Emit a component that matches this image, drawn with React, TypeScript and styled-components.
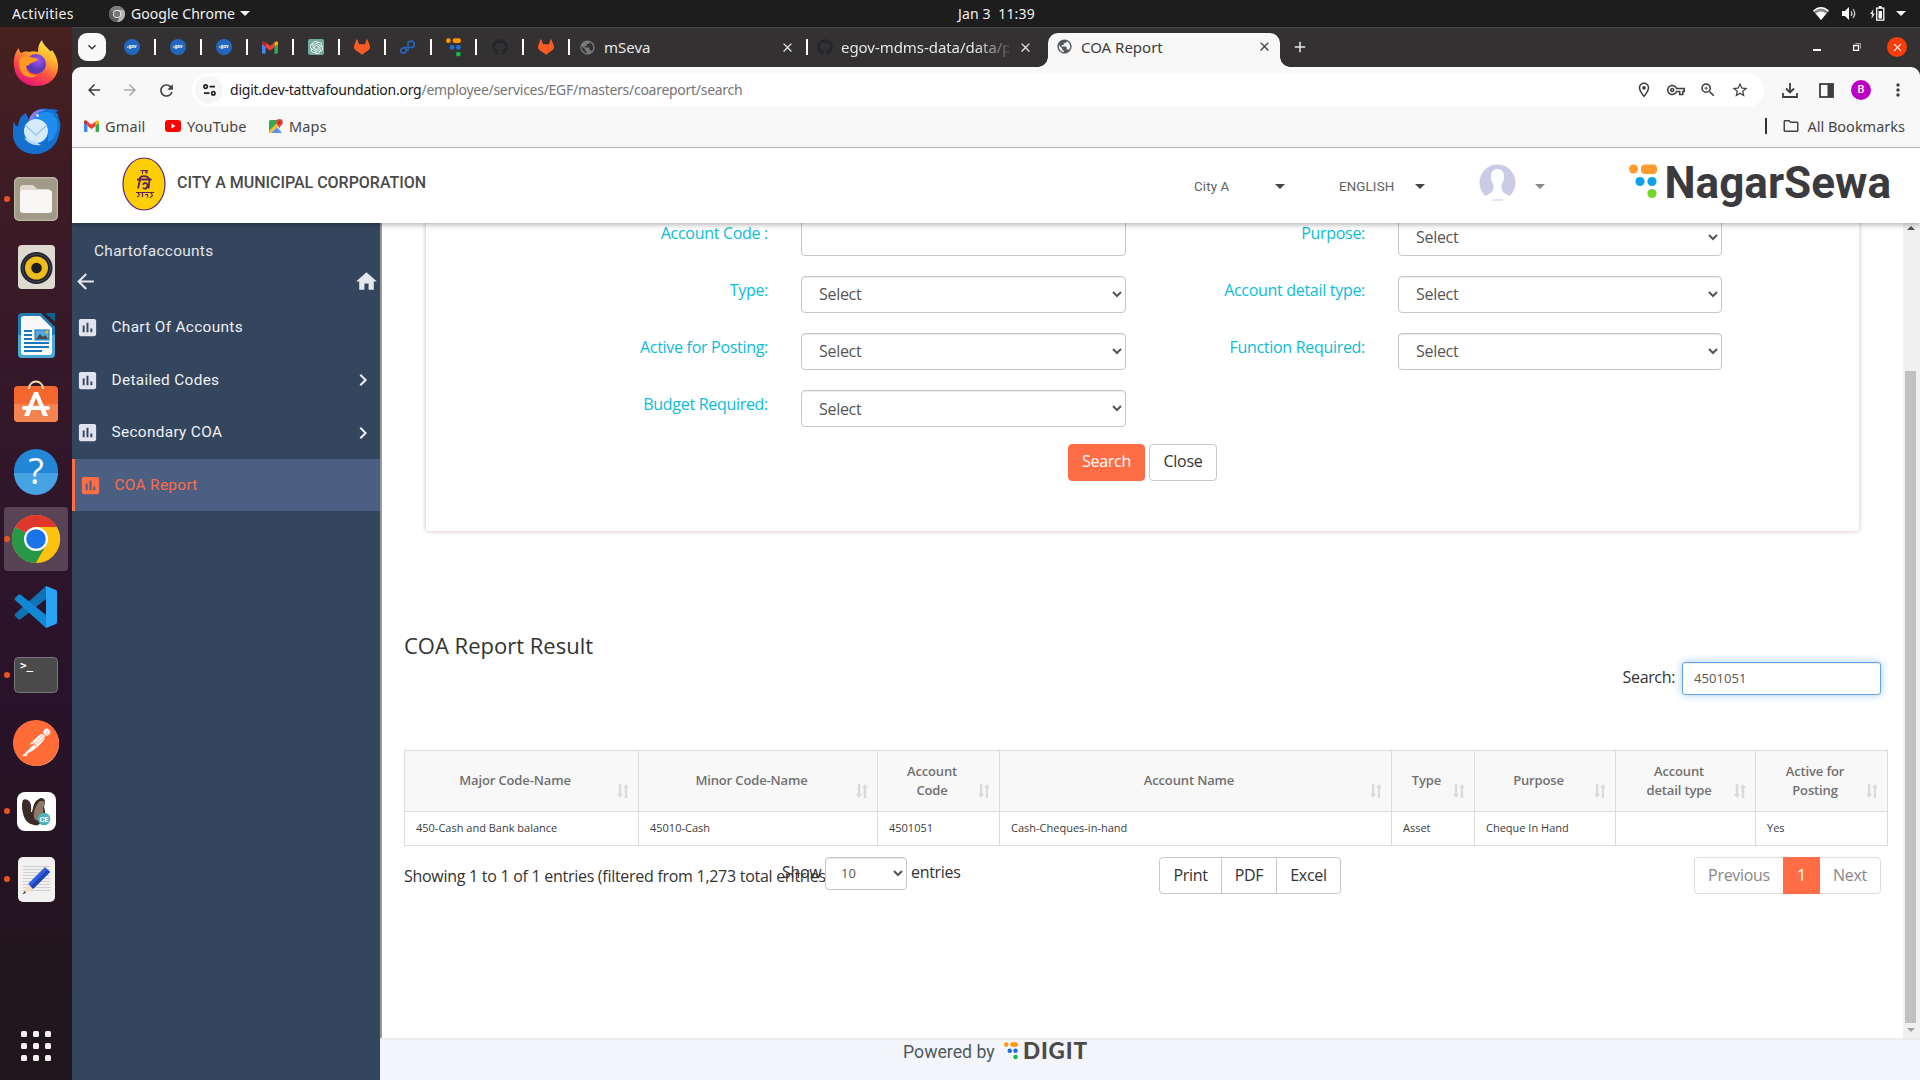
import React from "react";
import styled, { createGlobalStyle, css } from "styled-components";
import { SiGitlab, SiOpenai, SiPostman } from "react-icons/si";
import { FaGithub } from "react-icons/fa";
import {
  MdArrowBack, MdArrowForward, MdRefresh, MdOutlineVpnKey, MdZoomIn, MdStarBorder, MdHome,
  MdAssessment, MdChevronRight, MdMoreVert, MdPublic, MdClose, MdAdd, MdOutlineFolder, MdOutlineLocationOn,
  MdExpandMore,
} from "react-icons/md";

const ubuntu = `"Noto Sans", "Open Sans", sans-serif`;
const roboto = `Roboto, sans-serif`;
const openSans = `"Open Sans", sans-serif`;
const ORANGE = "#ff6d47";

const Global = createGlobalStyle`
  * { box-sizing: border-box; }
  body { margin: 0; overflow: hidden; background: #fff; }
  svg { display: block; flex: none; overflow: visible; }
`;

const Desktop = styled.div`
  width: 1920px; height: 1080px; overflow: hidden;
  display: flex; flex-direction: column;
`;

/* ---------- system bar ---------- */
const TopBar = styled.div`
  height: 27px; flex: none; background: #1d1d1d; color: #f2f2f2;
  display: grid; grid-template-columns: 946px auto 1fr; align-items: center;
  font: 400 14px/26px ${ubuntu}; white-space: pre;
  padding: 0 14px 0 12px;
`;
const TopLeft = styled.div`display: flex; align-items: center;`;
const Activities = styled.span`width: 97px; letter-spacing: .35px;`;
const AppName = styled.span`margin-left: 6px; width: 109px; letter-spacing: .05px;`;
const Clock = styled.span`letter-spacing: 0.15px;`;
const TopRight = styled.div`display: flex; align-items: center; justify-content: flex-end;`;
const Tray = styled.span<{ $gap: number }>`margin-right: ${p => p.$gap}px;`;

const Below = styled.div`flex: 1; min-height: 0; display: flex;`;

/* ---------- dock ---------- */
const Dock = styled.div`
  width: 72px; flex: none; padding-top: 2px;
  background: linear-gradient(180deg, #47201f 0%, #3c1b26 18%, #2e152b 48%, #28132a 65%, #23151e 88%, #1f161c 100%);
  display: flex; flex-direction: column;
`;
const DockItem = styled.div`height: 68px; display: flex; align-items: center; padding-left: 4px; position: relative;`;
const DockTile = styled.div<{ $on?: boolean }>`
  width: 64px; height: 64px; border-radius: 4px;
  display: flex; align-items: center; justify-content: center;
  ${p => p.$on && css`background: rgba(255,255,255,.2);`}
`;
const RunDot = styled.i`position: absolute; left: 4px; top: 31px; width: 6px; height: 6px; border-radius: 50%; background: #e95420;`;
const AppGrid = styled.div`
  margin: auto 0 19px 21px; display: grid; grid-template-columns: repeat(3, 6px); gap: 6px;
`;
const GridDot = styled.i`width: 6px; height: 6px; border-radius: 1.5px; background: #f3f1f0;`;

/* ---------- browser ---------- */
const Browser = styled.div`flex: 1; min-width: 0; display: flex; flex-direction: column; border-top: 1px solid #454344;`;
const TabStrip = styled.div`
  height: 39px; flex: none; background: #343132; display: flex; align-items: center; color: #e6e6e6;
  font: 400 15px/20px ${ubuntu}; padding: 0 0 1px 6px;
`;
const TabMenu = styled.div`
  width: 28px; height: 28px; border-radius: 9px; background: #f8f8f8; color: #333; margin-right: 18px;
  display: flex; align-items: center; justify-content: center;
`;
const PinnedTab = styled.div`width: 46px; display: flex; align-items: center; flex: none;`;
const Sep = styled.i`width: 2px; height: 16px; background: #fff; margin-left: 14px; flex: none;`;
const Tab = styled.div<{ $w: number; $pull?: boolean }>`
  width: ${p => p.$w}px; display: flex; align-items: center; padding-left: 9px; flex: none;
  ${p => p.$pull && css`margin-left: -14px;`}
`;
const TabTitle = styled.span<{ $fade?: boolean; $w: number }>`
  margin-left: 8px; width: ${p => p.$w}px; white-space: nowrap; overflow: hidden; flex: none;
  ${p => p.$fade && css`margin-right: 9px; letter-spacing: -0.05px; -webkit-mask-image: linear-gradient(90deg, #000 80%, rgba(0,0,0,.15) 100%);`}
`;
const ActiveTab = styled.div`
  align-self: flex-end; height: 34px; width: 232px; margin: 0 0 -1px 14px; background: #f8f8f8; color: #3c3c3c;
  border-radius: 10px 10px 0 0; display: flex; align-items: center; padding: 0 8px 7px; position: relative; flex: none;
  &::before, &::after { content: ""; position: absolute; bottom: 0; width: 10px; height: 10px; }
  &::before { left: -10px; background: radial-gradient(circle at 0 0, transparent 9.5px, #f8f8f8 10px); }
  &::after { right: -10px; background: radial-gradient(circle at 100% 0, transparent 9.5px, #f8f8f8 10px); }
`;
const NewTab = styled.span`margin-left: 11px;`;
const WindowButtons = styled.div`margin-left: auto; display: flex; align-items: center; padding-right: 13px;`;
const Minimize = styled.i`width: 8px; height: 2px; background: #fff; margin: 5px 32px 0 0;`;
const CloseWin = styled.span`
  width: 20px; height: 20px; border-radius: 50%; background: #f93d0a; color: #fff; margin-left: 26px;
  display: flex; align-items: center; justify-content: center;
`;
const ToolbarBack = styled.div`background: #343132; flex: none;`;
const Toolbar = styled.div`
  height: 46px; background: #f8f8f8; border-radius: 9px 9px 0 0; display: flex; align-items: center;
  color: #444; padding-left: 12px;
`;
const NavBtn = styled.span<{ $dim?: boolean }>`width: 36px; padding-left: 1px; color: ${p => (p.$dim ? "#a9a9a9" : "#3c3c3c")};`;
const Omnibox = styled.div`
  width: 1572px; height: 34px; border-radius: 17px; background: #fff; display: flex; align-items: center;
  padding-left: 3px; font: 14px/20px ${ubuntu}; color: #75767a;
`;
const SiteInfo = styled.span`
  width: 28px; height: 28px; border-radius: 50%; background: #f6f6f6; margin-right: 7px;
  display: flex; align-items: center; justify-content: center; color: #222;
`;
const Host = styled.span`color: #1a1a1a; letter-spacing: -0.23px;`;
const Path = styled.span`letter-spacing: -0.28px;`;
const OmniIcons = styled.div`margin-left: auto; display: flex; align-items: center; gap: 14px; padding-right: 15px; color: #3e3e3e;`;
const Avatar = styled.span`
  width: 20px; height: 20px; border-radius: 50%; background: #b900c4; color: #fff;
  font: 500 11px/20px ${roboto}; text-align: center;
`;
const ToolIcons = styled.div`margin-left: 18px; display: flex; align-items: center; gap: 17px; color: #3e3e3e;`;
const DownloadBox = styled.span`margin-right: 4px;`;
const Bookmarks = styled.div`
  height: 35px; flex: none; background: #f8f8f8; border-bottom: 1px solid #bdbdbd; display: flex; align-items: center;
  font: 400 14.5px/20px ${ubuntu}; color: #454545; padding: 0 15px 8px 12px;
`;
const Bookmark = styled.span<{ $w: number }>`
  width: ${p => p.$w}px; display: flex; align-items: center; gap: 6px; letter-spacing: 0.15px; white-space: nowrap;
`;
const AllBookmarks = styled.span`margin-left: auto; display: flex; align-items: center; letter-spacing: 0;`;
const DarkSep = styled.i`width: 2px; height: 16px; background: #333; margin-right: 15px;`;
const FolderBox = styled.span`margin-right: 7px;`;

/* ---------- page header ---------- */
const Header = styled.header`
  height: 75px; flex: none; background: #fff; box-shadow: 0 2px 5px rgba(0,0,0,.28); position: relative; z-index: 2;
  display: flex; align-items: center; padding: 0 31px 0 50px; font-family: ${roboto};
`;
const EmblemBox = styled.span`padding-bottom: 3px;`;
const CityName = styled.h1`
  margin: 0 0 0 11px; width: 1017px; font: 500 16px/20px ${roboto}; letter-spacing: -.02px; color: #4a4a4a; padding-bottom: 5px;
`;
const HeaderPick = styled.div<{ $w: number; $mr: number }>`
  width: ${p => p.$w}px; margin-right: ${p => p.$mr}px; display: flex; justify-content: space-between; align-items: center;
  font-size: 13.3px; line-height: 20px; letter-spacing: .15px; color: #5f5f5f; padding-top: 2px;
`;
const PersonBox = styled.span`padding-bottom: 7px; margin-top: -2px;`;
const Caret = styled.i<{ $c?: string }>`
  border: 5px solid transparent; border-top-color: ${p => p.$c ?? "#444"}; border-bottom: 0; width: 0; height: 0;
`;
const LogoBox = styled.div`margin-left: auto; padding-bottom: 7px;`;

/* ---------- body ---------- */
const PageBody = styled.div`flex: 1; min-height: 0; display: flex;`;
const Sidebar = styled.nav`
  width: 308px; flex: none; background: #34455e; color: #e4e7ee; font: 400 15.4px/20px ${roboto}; letter-spacing: .32px;
`;
const SideTitle = styled.div`padding: 18px 0 0 22px; height: 46px;`;
const SideNav = styled.div`display: flex; justify-content: space-between; align-items: center; height: 24px; padding: 0 1px 0 1px;`;
const SideList = styled.div`padding-top: 8px;`;
const SideItem = styled.div<{ $on?: boolean }>`
  height: 52.7px; display: flex; align-items: center; padding: 0 5px 0 4px; color: #f0f2f6;
  & > svg:first-child { color: #e1e4ee; }
  ${p => p.$on && css`
    background: #4a5f82; color: ${ORANGE}; border-left: 3px solid ${ORANGE}; height: 52px;
    & > svg:first-child { color: ${ORANGE}; }
  `}
`;
const SideLabel = styled.span`flex: 1; margin-left: 12.5px; padding-bottom: 1px;`;

const Right = styled.div`flex: 1; min-width: 0; display: flex; flex-direction: column;`;
const Frame = styled.div`flex: 1; min-height: 0; display: flex; border-left: 2px solid #999;`;
const Content = styled.main`
  flex: 1; min-width: 0; overflow: hidden; font: 16px/20px ${openSans}; color: #333; padding: 0 15px 0 22px;
`;
const Panel = styled.section`
  height: 338px; margin: -30px 29px 0 22px; padding-top: 26px; border-radius: 3px;
  box-shadow: 0 0 5px rgba(120,30,60,.32);
`;
const FormRow = styled.div`
  display: grid; grid-template-columns: 342px 325px 206px 324px; column-gap: 33px; height: 37px; margin-bottom: 20px;
`;
const Label = styled.label`color: #0cbcd6; text-align: right; line-height: 28px; letter-spacing: -0.3px; white-space: nowrap;`;
const controlBorder = css`
  border: 1px solid #c6c6c6; border-radius: 4px; background: #fff; color: #555; box-shadow: inset 0 1px 1px rgba(0,0,0,.075);
  outline: none;
`;
const Field = styled.input`${controlBorder} width: 100%; height: 37px; font: inherit;`;
const Select = styled.select<{ $low?: boolean }>`
  ${controlBorder} width: 100%; height: 37px; padding: 0 13px ${p => (p.$low ? 0 : 2)}px; font: 16px ${openSans}; letter-spacing: -0.3px;
`;
const Actions = styled.div`display: flex; justify-content: center; gap: 4px; margin-top: -3px;`;
const Button = styled.button<{ $primary?: boolean }>`
  height: 37px; width: ${p => (p.$primary ? 77 : 68)}px; border-radius: 4px; padding: 0 0 4px; text-align: center;
  font: 16px/20px ${openSans}; letter-spacing: -0.3px;
  border: 1px solid ${p => (p.$primary ? ORANGE : "#c8c8c8")}; background: ${p => (p.$primary ? ORANGE : "#fff")};
  color: ${p => (p.$primary ? "#fff" : "#333")};
`;
const ResultTitle = styled.h2`margin: 96px 0 1px; font: 400 22px/36px ${openSans}; letter-spacing: 0;`;
const Filter = styled.div`
  display: flex; justify-content: flex-end; align-items: center; gap: 7px; padding-right: 7px; margin-top: -2px; height: 33px;
  letter-spacing: -0.35px;
`;
const FilterText = styled.span`padding-bottom: 3px;`;
const FilterInput = styled.input`
  width: 199px; height: 33px; border: 1px solid #66a3ea; border-radius: 3px; padding: 0 11px 2px; outline: none;
  font: 13px ${openSans}; color: #555; letter-spacing: .05px;
  box-shadow: inset 0 1px 1px rgba(0,0,0,.075), 0 0 8px rgba(102,175,233,.6);
`;
const Table = styled.table`
  margin-top: 55px; width: 1483px; border-collapse: collapse; table-layout: fixed; color: #444;
  th, td { border: 1px solid #dcdcdc; }
`;
const Th = styled.th`
  height: 61px; background: #f8f8f8; padding: 0; font: 600 13px/19px ${openSans}; letter-spacing: -0.14px; color: #707070;
`;
const ThInner = styled.div`display: flex; height: 60px; align-items: center; padding: 0 9px 0 8px;`;
const ThLabel = styled.span`flex: 1; text-align: center; white-space: pre-line; padding-bottom: 1px;`;
const SortBox = styled.span`align-self: flex-end; padding-bottom: 13px;`;
const Td = styled.td`height: 34px; padding: 0 0 2px 11px; font: 11px/16px ${openSans}; letter-spacing: 0; color: #3c3c3c;`;
const TableFoot = styled.div`display: flex; align-items: flex-start; margin-top: 11px; padding-right: 7px; letter-spacing: -0.3px;`;
const Info = styled.div`width: 378px; flex: none; white-space: nowrap; padding-top: 9px; letter-spacing: -0.28px;`;
const LengthPick = styled.div`width: 377px; flex: none; display: flex; align-items: center; white-space: pre;`;
const LengthWord = styled.span<{ $w?: number }>`width: ${p => (p.$w ? p.$w + "px" : "auto")}; padding-bottom: 3px;`;
const LengthSelect = styled.select`${controlBorder} width: 82px; height: 33px; padding: 0 11px 2px; font: 13px ${openSans}; margin-right: 4px;`;
const Group = styled.div<{ $soft?: boolean }>`
  display: flex; height: 37px; border: 1px solid ${p => (p.$soft ? "#dcdcdc" : "#c8c8c8")}; border-radius: 4px; background: #fff;
  margin-left: ${p => (p.$soft ? "auto" : "0")};
`;
const GroupBtn = styled.span<{ $w: number; $line?: boolean; $current?: boolean; $muted?: boolean }>`
  width: ${p => p.$w}px; text-align: center; line-height: 34px; color: ${p => (p.$muted ? "#878787" : "#333")};
  ${p => p.$line && css`border-right: 1px solid #c8c8c8;`}
  ${p => p.$current && css`background: ${ORANGE}; color: #fff; margin: -1px 0; line-height: 36px;`}
`;
const Scrollbar = styled.div`width: 17px; flex: none; padding-right: 2px; background: #f0f0f0; display: flex; flex-direction: column; align-items: center;`;
const ScrollArrow = styled.i<{ $down?: boolean }>`
  border: 4px solid transparent; margin: 3px 0 5px; width: 0; height: 0;
  ${p => (p.$down ? css`border-top-color: #a3a3a3; border-bottom: 0; margin-top: auto; margin-bottom: 6px;` : css`border-bottom-color: #505050; border-top: 0;`)}
`;
const Thumb = styled.i`width: 11px; height: 652px; margin-top: 136px; background: #c1c1c1;`;
const Footer = styled.footer`
  height: 42px; flex: none; border-top: 2px solid #ededee; background: #f4f5fa; display: flex; padding-left: 523px;
  font: 400 17.7px/25px ${roboto}; color: #4c5a5f;
`;
const FooterText = styled.span`width: 101px; white-space: nowrap;`;

/* ---------- drawings ---------- */
const Firefox = () => (
  <svg width="46" height="46" viewBox="0 0 46 46">
    <defs>
      <linearGradient id="ff" x1=".8" y1="0" x2=".3" y2="1"><stop offset="0" stopColor="#fff14f" /><stop offset=".35" stopColor="#ffb02e" /><stop offset=".65" stopColor="#ff5140" /><stop offset="1" stopColor="#e3107a" /></linearGradient>
      <radialGradient id="ffg" cx=".6" cy=".3"><stop offset="0" stopColor="#a354f5" /><stop offset="1" stopColor="#5a38b4" /></radialGradient>
    </defs>
    <path d="M1 26C0 17 3 11 6 8c0 3 1 4 2 5 2-1 5-2 8-1 3-1 6-1 9 0 0-5 1-9 4-12 1 5 5 7 8 11 1 1 2-1 2-1 6 8 8 18 4 25-4 8-12 11-20 11C11 46 2 38 1 26z" fill="url(#ff)" />
    <circle cx="23" cy="24" r="10" fill="url(#ffg)" />
    <path d="M6 20c3-3 7-5 12-3 3 1 5 1 7 2-1 3-6 3-8 5-2 2-4 2-4 2 0 7 6 10 12 9-8 5-16 1-18-6-1-3-1-6-1-9z" fill="#ff9a22" />
  </svg>
);
const Thunderbird = () => (
  <svg width="48" height="46" viewBox="0 0 48 46">
    <path d="M2 13c1 5 3 5 4 5 1-8 4-11 8-13l3 7C19 4 27-1 36 1c3 0 8 0 11 2l-4 1c3 1 4 4 3 5 3 5 3 11 1 17-2 12-12 20-24 20C9 46 0 36 1 24c0-4 0-8 1-11z" fill="#1470cf" />
    <path d="M17 12C19 4 27 0 34 2c-7 1-10 4-12 9l-4 5z" fill="#8a7be8" />
    <path d="M20 13C23 4 35 2 41 6l4 6c2 10-1 18-9 22V20c-3-6-9-8-16-7z" fill="#1f8df0" />
    <circle cx="24" cy="23" r="12" fill="#d5ebfb" /><path d="M13.500 17.500L24 27l10.500-9.500" fill="none" stroke="#9ec9ee" strokeWidth="1.600" />
    <path d="M12 30c4 5 9 8 17 7-3-1-4-3-4-3z" fill="#b8dcfa" />
    <circle cx="25.500" cy="7.500" r="1.300" fill="#fff" />
  </svg>
);
const Files = () => (
  <svg width="44" height="44" viewBox="0 0 44 44"><rect width="44" height="44" rx="5" fill="#a19a88" /><rect x=".7" y=".7" width="42.6" height="42.6" rx="4.5" fill="none" stroke="#c2bcab" />
    <path d="M6 11q0-3 3-3h9q2 0 3 2t3 2h11v8H6z" fill="#dedacd" /><rect x="6" y="13" width="32" height="23" rx="3" fill="#f8f7f5" /></svg>
);
const Rhythm = () => (
  <svg width="37" height="44" viewBox="0 0 37 44"><rect width="37" height="44" rx="4" fill="#dedad0" /><circle cx="18.500" cy="23" r="16" fill="#23232d" /><circle cx="18.500" cy="23" r="14" fill="none" stroke="#454a58" />
    <circle cx="18.500" cy="23" r="11.500" fill="#eebd1c" /><circle cx="18.500" cy="23" r="5.300" fill="#1d1d1d" /></svg>
);
const Writer = () => (
  <svg width="37" height="45" viewBox="0 0 37 45"><path d="M4 0h19l14 14v27q0 4-4 4H4q-4 0-4-4V4q0-4 4-4z" fill="#1d7db4" /><path d="M0 22h37v19q0 4-4 4H4q-4 0-4-4z" fill="#4ba6d3" />
    <path d="M27 0h10v9z" fill="#0e5f92" /><path d="M6 3h16l12 12v24q0 3-3 3H6q-3 0-3-3V6q0-3 3-3z" fill="#f8f8f8" />
    <path d="M6 18h8M6 22h8M6 26h8M6 30h25M6 34h25M6 38h18" stroke="#1878b8" strokeWidth="2" /><rect x="17" y="17" width="14" height="10" fill="#54a9dd" stroke="#1878b8" /><path d="M18 26l4-5 3 3 2-2 3 4z" fill="#474747" /><circle cx="29" cy="19" r="1.500" fill="#f4c430" /></svg>
);
const Software = () => (
  <svg width="44" height="46" viewBox="0 0 44 46"><rect y="6" width="44" height="36" rx="4" fill="#f4672e" /><path d="M0 24h44v14q0 4-4 4H4q-4 0-4-4z" fill="#f58350" /><path d="M15 9c0-10 14-10 14 0" fill="none" stroke="#f7dfae" strokeWidth="2" />
    <path d="M10 36l10-24h4l10 24h-5l-7-18-7 18z" fill="#fff" /><rect x="8" y="26" width="28" height="4" rx="2" fill="#fff" /></svg>
);
const HelpText = styled.text`font: 400 36px ${openSans};`;
const Help = () => (
  <svg width="44" height="44" viewBox="0 0 44 44"><circle cx="22" cy="22" r="22" fill="#2287d6" /><path d="M0 24h44a22 22 0 0 1-44 0z" fill="#45a2e3" /><HelpText x="22" y="35" textAnchor="middle" fill="#fff">?</HelpText></svg>
);
const Chrome = ({ size, gray }: { size: number; gray?: boolean }) => (
  <svg width={size} height={size} viewBox="0 0 48 48">
    <circle cx="24" cy="24" r="24" fill={gray ? "#9b9b9b" : "#fbbc05"} />
    <path d="M24 24L3.200 12A24 24 0 0 1 44.800 12z" fill={gray ? "#7d7d7d" : "#e0362b"} />
    <path d="M3.200 12A24 24 0 0 0 24 48L34.400 30 24 24z" fill={gray ? "#5f5f5f" : "#279847"} />
    <path d="M24 12h20.800A24 24 0 0 1 24 48l10.400-18z" fill={gray ? "#b5b5b5" : "#fcc20f"} />
    <circle cx="24" cy="24" r="12" fill="#fff" /><circle cx="24" cy="24" r="9.800" fill={gray ? "#777" : "#1a73e8"} />
  </svg>
);
const VsCode = () => (
  <svg width="42" height="42" viewBox="0 0 42 42"><path d="M31 0L0 28q-1 1 0 2l3 3q1 1 3 0L31 13z" fill="#0f72b5" /><path d="M31 42L0 14q-1-1 0-2l3-3q1-1 3 0l25 20z" fill="#1288d4" /><path d="M31 0l10 4q1 .5 1 2v30q0 1.500-1 2l-10 4z" fill="#29a4f2" /></svg>
);
const TermText = styled.text`font: 700 11px "DejaVu Sans Mono", monospace;`;
const Terminal = () => (
  <svg width="44" height="36" viewBox="0 0 44 36"><rect x=".5" y=".5" width="43" height="35" rx="4" fill="#4b4b4b" stroke="#777" /><TermText x="6" y="12" fill="#fff">&gt;_</TermText></svg>
);
const DbText = styled.text`font: 700 7.5px ${roboto};`;
const DBeaver = () => (
  <svg width="39" height="39" viewBox="0 0 39 39"><rect width="39" height="39" rx="8" fill="#fff" />
    <path d="M6 8c3-2 7 0 8 5 1 6 1 10 4 16l4 4c-5 1-11-1-14-6C5 20 4 13 6 8z" fill="#3c2b27" />
    <path d="M15 30c-2-5-1-10 1-14 1-6 4-10 8-10 3 0 4 2 4 4l-1 5c2 5 1 12-1 16-4 2-8 2-11-1z" fill="#3c2b27" />
    <path d="M17 26c-1-7 2-12 4-15 2-3 6-3 7 0l-2 5c1 5-1 9-4 12-2 1-4 0-5-2z" fill="#90776a" />
    <path d="M14.500 20c0-7 3-12 8-14" fill="none" stroke="#fff" strokeWidth="1.200" />
    <circle cx="27" cy="27" r="6.300" fill="#4eb0b8" /><DbText x="27" y="29.700" textAnchor="middle" fill="#fff">CE</DbText></svg>
);
const Editor = () => (
  <svg width="37" height="45" viewBox="0 0 37 45"><rect width="37" height="45" rx="5" fill="#f1f1f1" /><path d="M5 9.500h27M5 12.500h27M5 15.500h27M5 18.500h27M5 21.500h27M5 24.500h27M5 27.500h27M5 30.500h27M5 33.500h27" stroke="#cfcfcf" />
    <path d="M27 10l5 5-17 17-5-5z" fill="#2f5fe0" /><path d="M29.500 12.500l2.500 2.500-17 17-2.500-2.500z" fill="#1d44b4" /><path d="M10 27l5 5-10 5z" fill="#fbdcbd" /><path d="M6.500 34l1.500 1.800-3.500 1.700z" fill="#444" /></svg>
);
const PostmanDisc = styled.span`width: 45px; height: 45px; border-radius: 50%; background: #fff; display: flex; align-items: center; justify-content: center;`;
const Postman = () => <PostmanDisc><SiPostman size={46} color="#ff6c37" /></PostmanDisc>;
const Gmail = ({ size = 15 }: { size?: number }) => (
  <svg width={size} height={size * 0.8} viewBox="0 0 20 16"><path d="M0 3v11.500Q0 16 1.500 16H4.500V7z" fill="#4285f4" /><path d="M20 3v11.500q0 1.500-1.500 1.500h-3V7z" fill="#34a853" /><path d="M15.500 7l4.500-3V2.500Q19.500-.5 17 .8L15.500 2z" fill="#fbbc04" /><path d="M4.500 8V2L10 6l5.500-4v6L10 12z" fill="#ea4335" /><path d="M0 3.500L4.500 7V2L3 .8Q.5-.5 0 2.500z" fill="#c5221f" /></svg>
);
const EgovText = styled.text`font: 700 5px ${roboto};`;
const Egov = () => (
  <svg width="16" height="16" viewBox="0 0 16 16"><circle cx="8" cy="8" r="8" fill="#2266c0" /><EgovText x="8.500" y="9.300" textAnchor="middle" fill="#fff">gov</EgovText><circle cx="3.800" cy="8" r="1.100" fill="#f0b040" /></svg>
);
const OpenAIBox = styled.span`width: 16px; height: 16px; border-radius: 2px; background: #74aa9c; display: flex; align-items: center; justify-content: center;`;
const Infinity8 = () => (
  <svg width="16" height="16" viewBox="0 0 16 16" fill="none" stroke="#2763b8" strokeWidth="1.700"><circle cx="3.500" cy="11.500" r="2.700" /><path d="M8 4.500a3.200 3.200 0 1 1 3 4H3.500M8 3v9" /></svg>
);
const DigitMark = ({ w, c }: { w: number; c: [string, string, string] }) => (
  <svg width={w} height={w * 1.25} viewBox="0 0 28 35"><circle cx="4.500" cy="5" r="4.500" fill={c[0]} /><rect x="12.500" y=".5" width="15.500" height="9" rx="4" fill={c[0]} /><circle cx="11.500" cy="17.500" r="4.500" fill={c[1]} /><circle cx="23" cy="17.500" r="4.500" fill={c[1]} /><circle cx="23" cy="30" r="4.500" fill={c[2]} /></svg>
);
const Globe = ({ c }: { c: string }) => <MdPublic size={17} color={c} />;
const MapsIcon = () => (
  <svg width="14" height="14" viewBox="0 0 14 14"><rect width="13" height="13" y="1" rx="1.500" fill="#34a853" /><path d="M1 14L13 4v8.500q0 1.500-1.500 1.500z" fill="#f4f4f4" /><path d="M2 14l6-5.500 5 5.500z" fill="#5b8df5" /><path d="M0 12l8-8 2 2-8 8H1.500Q0 14 0 12z" fill="#fbc02d" /><path d="M10.500 0a3.300 3.300 0 0 1 3.300 3.300C13.800 6 11 6.500 10.500 10 10 6.500 7.200 6 7.200 3.300A3.300 3.300 0 0 1 10.500 0z" fill="#ea4335" /><circle cx="10.500" cy="3.400" r="1.200" fill="#a52714" /></svg>
);
const YouTube = () => <svg width="16" height="12" viewBox="0 0 16 12"><rect width="16" height="12" rx="3" fill="#f00" /><path d="M6.500 3.500v5l4-2.500z" fill="#fff" /></svg>;
const Tune = () => (
  <svg width="13" height="12" viewBox="0 0 13 12" fill="none" stroke="currentColor" strokeWidth="1.700"><circle cx="2.600" cy="2.600" r="1.700" /><path d="M6.500 2.600H12M1 9.200h5.500" /><circle cx="10.300" cy="9.200" r="1.700" /></svg>
);
const Download = () => <svg width="16" height="16" viewBox="0 0 16 16" fill="none" stroke="currentColor" strokeWidth="1.800"><path d="M8 1v9M4 6.500l4 4 4-4M1 11v4h14v-4" /></svg>;
const SidePanel = () => <svg width="15" height="15" viewBox="0 0 15 15"><rect x="1" y="1" width="13" height="13" fill="none" stroke="currentColor" strokeWidth="1.800" /><path d="M8.500 1H14v13H8.500z" fill="currentColor" /></svg>;
const Restore = () => <svg width="8" height="8" viewBox="0 0 8 8" fill="none" stroke="#fff"><path d="M.6 2.500h4.900v4.900H.6z" strokeWidth="1.300" /><path d="M2.500.5h5v5" strokeWidth=".7" opacity=".8" /></svg>;
const Wifi = () => <svg width="16" height="13" viewBox="0 0 16 13"><path d="M0 4q8-7.500 16 0L8 13z" fill="#8a8a8a" /><path d="M2.800 6.500q5.200-4 10.400 0L8 13z" fill="#fff" /><path d="M.5 4q7.500-6.500 15 0" fill="none" stroke="#fff" strokeWidth="1.300" /></svg>;
const Volume = () => <svg width="15" height="13" viewBox="0 0 15 13"><path d="M0 4h3l4-4v13L3 9H0z" fill="#fff" /><path d="M9 4q2 2.500 0 5M11 2q3.500 4.500 0 9" fill="none" stroke="#ccc" strokeWidth="1.200" /></svg>;
const Battery = () => <svg width="15" height="15" viewBox="0 0 15 15"><path d="M3.500 3L0 8h2l-.5 5L5 7.500H3z" fill="#ddd" /><path d="M6.700 2.200h7.100v12H6.700z" fill="none" stroke="#fff" strokeWidth="1.300" /><path d="M8.700 0h3v2h-3zM8.500 5H12v7.500H8.500z" fill="#fff" /></svg>;
const Sort = () => <svg width="12" height="14" viewBox="0 0 12 14" fill="#dadada"><path d="M1.800 0h2.500v10H6L3 14 0 10h1.800zM7.700 14h2.500V4H12L9 0 6 4h1.700z" /></svg>;
const Emblem = () => (
  <svg width="44" height="54" viewBox="0 0 44 54"><ellipse cx="22" cy="27" rx="21" ry="26" fill="#fdcf00" stroke="#5a2580" strokeWidth="1.200" />
    <g fill="none" stroke="#5b2262"><path d="M18.500 13.500h7.500M20.500 13.500v3.500M23 13.500l1.500 3M25 13.500v3" strokeWidth="1.100" /><path d="M15 22.500h14.500M18 22.500l-2 9M17.500 22c1-4 8-4 10 .5M21 28q1-3 3.500-1.500t-.5 5q-2.500.5-3-1M27.500 22.500l-1 9" strokeWidth="1.800" /><path d="M14 35.500h18M16 35.500q3 3-1 4.500M20.500 36v4M23 37.500h2.500v3M29 36q3 3-1 4.500" strokeWidth="1.200" /></g></svg>
);
const Person = () => (
  <svg width="37" height="37" viewBox="0 0 37 37"><circle cx="18.500" cy="18.500" r="18" fill="#c9cce4" /><path d="M18.500 5c5 0 7 4 6.500 9-.4 3.500-1.500 5-2.500 6.500-.5 3 .5 6 2 8 2.500 2 5 2.500 7 4v4.500h-26V32.500c2-1.500 4.500-2 7-4 1.500-2 2.500-5 2-8-1-1.500-2.100-3-2.500-6.500-.5-5 1.500-9 6.500-9z" fill="#fff" /><path d="M13 36h11" stroke="#c9cce4" /></svg>
);
const BrandText = styled.text`font: 700 44.5px ${roboto};`;
const NagarSewa = () => (
  <svg width="260" height="50" viewBox="0 0 260 50"><g><circle cx="4.500" cy="12" r="4.500" fill="#ff9a2e" /><rect x="12" y="7.500" width="16" height="9.500" rx="4" fill="#ff9a2e" /><circle cx="11" cy="24.500" r="4.600" fill="#0fa2e6" /><circle cx="23" cy="24.500" r="4.600" fill="#0fa2e6" /><circle cx="23" cy="36.500" r="4.600" fill="#72d62c" /></g>
    <BrandText x="35.500" y="41" textLength="226.500" lengthAdjust="spacingAndGlyphs" fill="#3b3a3e">NagarSewa</BrandText></svg>
);
const DigitText = styled.text`font: 900 22.5px Lato, sans-serif;`;
const DigitLogo = () => <svg width="66" height="20" viewBox="0 0 66 20"><DigitText x="0" y="18.500" textLength="64" fill="#4b4b4d">DIGIT</DigitText></svg>;
const FooterMark = styled.span`margin: 2px 5px 0 0;`;

const dock: { icon: React.ReactNode; run?: boolean; on?: boolean }[] = [
  { icon: <Firefox /> }, { icon: <Thunderbird /> }, { icon: <Files />, run: true }, { icon: <Rhythm /> },
  { icon: <Writer /> }, { icon: <Software /> }, { icon: <Help /> }, { icon: <Chrome size={48} />, run: true, on: true },
  { icon: <VsCode /> }, { icon: <Terminal />, run: true }, { icon: <Postman /> }, { icon: <DBeaver />, run: true },
  { icon: <Editor />, run: true },
];
const digitColors: [string, string, string] = ["#ff9500", "#1c6fd4", "#0cbf4c"];
const pinned = [
  <Egov />, <Egov />, <Egov />, <Gmail size={16} />, <OpenAIBox><SiOpenai size={13} color="#fff" /></OpenAIBox>,
  <SiGitlab size={16} color="#fc5a25" />, <Infinity8 />, <DigitMark w={15} c={digitColors} />, <FaGithub size={16} color="#22272c" />,
  <SiGitlab size={16} color="#fc5a25" />,
];
const rows: [string, string | null][] = [
  ["Account Code :", "Purpose:"], ["Type:", "Account detail type:"], ["Active for Posting:", "Function Required:"], ["Budget Required:", null],
];
const columns: [string, number, string][] = [
  ["Major Code-Name", 234, "450-Cash and Bank balance"], ["Minor Code-Name", 239, "45010-Cash"], ["Account\nCode", 122, "4501051"],
  ["Account Name", 392, "Cash-Cheques-in-hand"], ["Type", 83, "Asset"], ["Purpose", 141, "Cheque In Hand"],
  ["Account\ndetail type", 140, ""], ["Active for\nPosting", 132, "Yes"],
];
const sideItems: [string, boolean, boolean][] = [
  ["Chart Of Accounts", false, false], ["Detailed Codes", true, false], ["Secondary COA", true, false], ["COA Report", false, true],
];

const SelectBox = ({ low }: { low?: boolean }) => <Select $low={low} defaultValue="Select"><option>Select</option></Select>;

export default function App() {
  return (
    <Desktop>
      <Global />
      <TopBar>
        <TopLeft><Activities>Activities</Activities><Chrome size={16} gray /><AppName>Google Chrome</AppName><Caret $c="#f2f2f2" /></TopLeft>
        <Clock>Jan 3  11:39</Clock>
        <TopRight>
          <Tray $gap={13}><Wifi /></Tray><Tray $gap={13}><Volume /></Tray><Tray $gap={11}><Battery /></Tray><Caret $c="#f2f2f2" />
        </TopRight>
      </TopBar>
      <Below>
        <Dock>
          {dock.map((d, i) => (
            <DockItem key={i}><DockTile $on={d.on}>{d.icon}</DockTile>{d.run && <RunDot />}</DockItem>
          ))}
          <AppGrid>{Array.from({ length: 9 }, (_, i) => <GridDot key={i} />)}</AppGrid>
        </Dock>
        <Browser>
          <TabStrip>
            <TabMenu><MdExpandMore size={16} /></TabMenu>
            {pinned.map((p, i) => <PinnedTab key={i}>{p}<Sep /></PinnedTab>)}
            <Tab $w={222} $pull><Globe c="#77797d" /><TabTitle $w={176}>mSeva</TabTitle><MdClose size={15} /></Tab>
            <Sep />
            <Tab $w={226}><FaGithub size={16} color="#22272c" /><TabTitle $w={168} $fade>egov-mdms-data/data/p</TabTitle><MdClose size={15} /></Tab>
            <ActiveTab><Globe c="#55585d" /><TabTitle $w={176}>COA Report</TabTitle><MdClose size={15} /></ActiveTab>
            <NewTab><MdAdd size={18} /></NewTab>
            <WindowButtons><Minimize /><Restore /><CloseWin><MdClose size={13} /></CloseWin></WindowButtons>
          </TabStrip>
          <ToolbarBack>
            <Toolbar>
              <NavBtn><MdArrowBack size={18} /></NavBtn><NavBtn $dim><MdArrowForward size={18} /></NavBtn><NavBtn><MdRefresh size={19} /></NavBtn>
              <Omnibox>
                <SiteInfo><Tune /></SiteInfo><Host>digit.dev-tattvafoundation.org</Host><Path>/employee/services/EGF/masters/coareport/search</Path>
                <OmniIcons><MdOutlineLocationOn size={18} /><MdOutlineVpnKey size={18} /><MdZoomIn size={18} /><MdStarBorder size={18} /></OmniIcons>
              </Omnibox>
              <ToolIcons><DownloadBox><Download /></DownloadBox><SidePanel /><Avatar>B</Avatar><MdMoreVert size={20} /></ToolIcons>
            </Toolbar>
          </ToolbarBack>
          <Bookmarks>
            <Bookmark $w={81}><Gmail />Gmail</Bookmark><Bookmark $w={104}><YouTube />YouTube</Bookmark><Bookmark $w={70}><MapsIcon />Maps</Bookmark>
            <AllBookmarks><DarkSep /><FolderBox><MdOutlineFolder size={18} /></FolderBox>All Bookmarks</AllBookmarks>
          </Bookmarks>
          <Header>
            <EmblemBox><Emblem /></EmblemBox>
            <CityName>CITY A MUNICIPAL CORPORATION</CityName>
            <HeaderPick $w={91} $mr={54}>City A<Caret /></HeaderPick>
            <HeaderPick $w={86} $mr={54}>ENGLISH<Caret /></HeaderPick>
            <HeaderPick $w={66} $mr={0}><PersonBox><Person /></PersonBox><Caret $c="#888" /></HeaderPick>
            <LogoBox><NagarSewa /></LogoBox>
          </Header>
          <PageBody>
            <Sidebar>
              <SideTitle>Chartofaccounts</SideTitle>
              <SideNav><MdArrowBack size={25} /><MdHome size={25} /></SideNav>
              <SideList>
                {sideItems.map(([t, more, on]) => (
                  <SideItem key={t} $on={on}><MdAssessment size={23} /><SideLabel>{t}</SideLabel>{more && <MdChevronRight size={24} />}</SideItem>
                ))}
              </SideList>
            </Sidebar>
            <Right>
              <Frame>
                <Content>
                  <Panel>
                    {rows.map(([a, b], i) => (
                      <FormRow key={a}>
                        <Label>{a}</Label>{i === 0 ? <Field /> : <SelectBox low={i === 3} />}
                        {b && <><Label>{b}</Label><SelectBox /></>}
                      </FormRow>
                    ))}
                    <Actions><Button $primary>Search</Button><Button>Close</Button></Actions>
                  </Panel>
                  <ResultTitle>COA Report Result</ResultTitle>
                  <Filter><FilterText>Search:</FilterText><FilterInput defaultValue="4501051" /></Filter>
                  <Table>
                    <colgroup>{columns.map(([n, w]) => <col key={n} width={w} />)}</colgroup>
                    <thead><tr>{columns.map(([n]) => <Th key={n}><ThInner><ThLabel>{n}</ThLabel><SortBox><Sort /></SortBox></ThInner></Th>)}</tr></thead>
                    <tbody><tr>{columns.map(([n, , v]) => <Td key={n}>{v}</Td>)}</tr></tbody>
                  </Table>
                  <TableFoot>
                    <Info>Showing 1 to 1 of 1 entries (filtered from 1,273 total entries)</Info>
                    <LengthPick><LengthWord $w={43}>Show</LengthWord><LengthSelect defaultValue="10"><option>10</option></LengthSelect><LengthWord>entries</LengthWord></LengthPick>
                    <Group><GroupBtn $w={62} $line>Print</GroupBtn><GroupBtn $w={55} $line>PDF</GroupBtn><GroupBtn $w={63}>Excel</GroupBtn></Group>
                    <Group $soft><GroupBtn $w={88} $muted>Previous</GroupBtn><GroupBtn $w={37} $current>1</GroupBtn><GroupBtn $w={60} $muted>Next</GroupBtn></Group>
                  </TableFoot>
                </Content>
                <Scrollbar><ScrollArrow /><Thumb /><ScrollArrow $down /></Scrollbar>
              </Frame>
              <Footer>
                <FooterText>Powered by</FooterText>
                <FooterMark><DigitMark w={14} c={digitColors} /></FooterMark>
                <DigitLogo />
              </Footer>
            </Right>
          </PageBody>
        </Browser>
      </Below>
    </Desktop>
  );
}
